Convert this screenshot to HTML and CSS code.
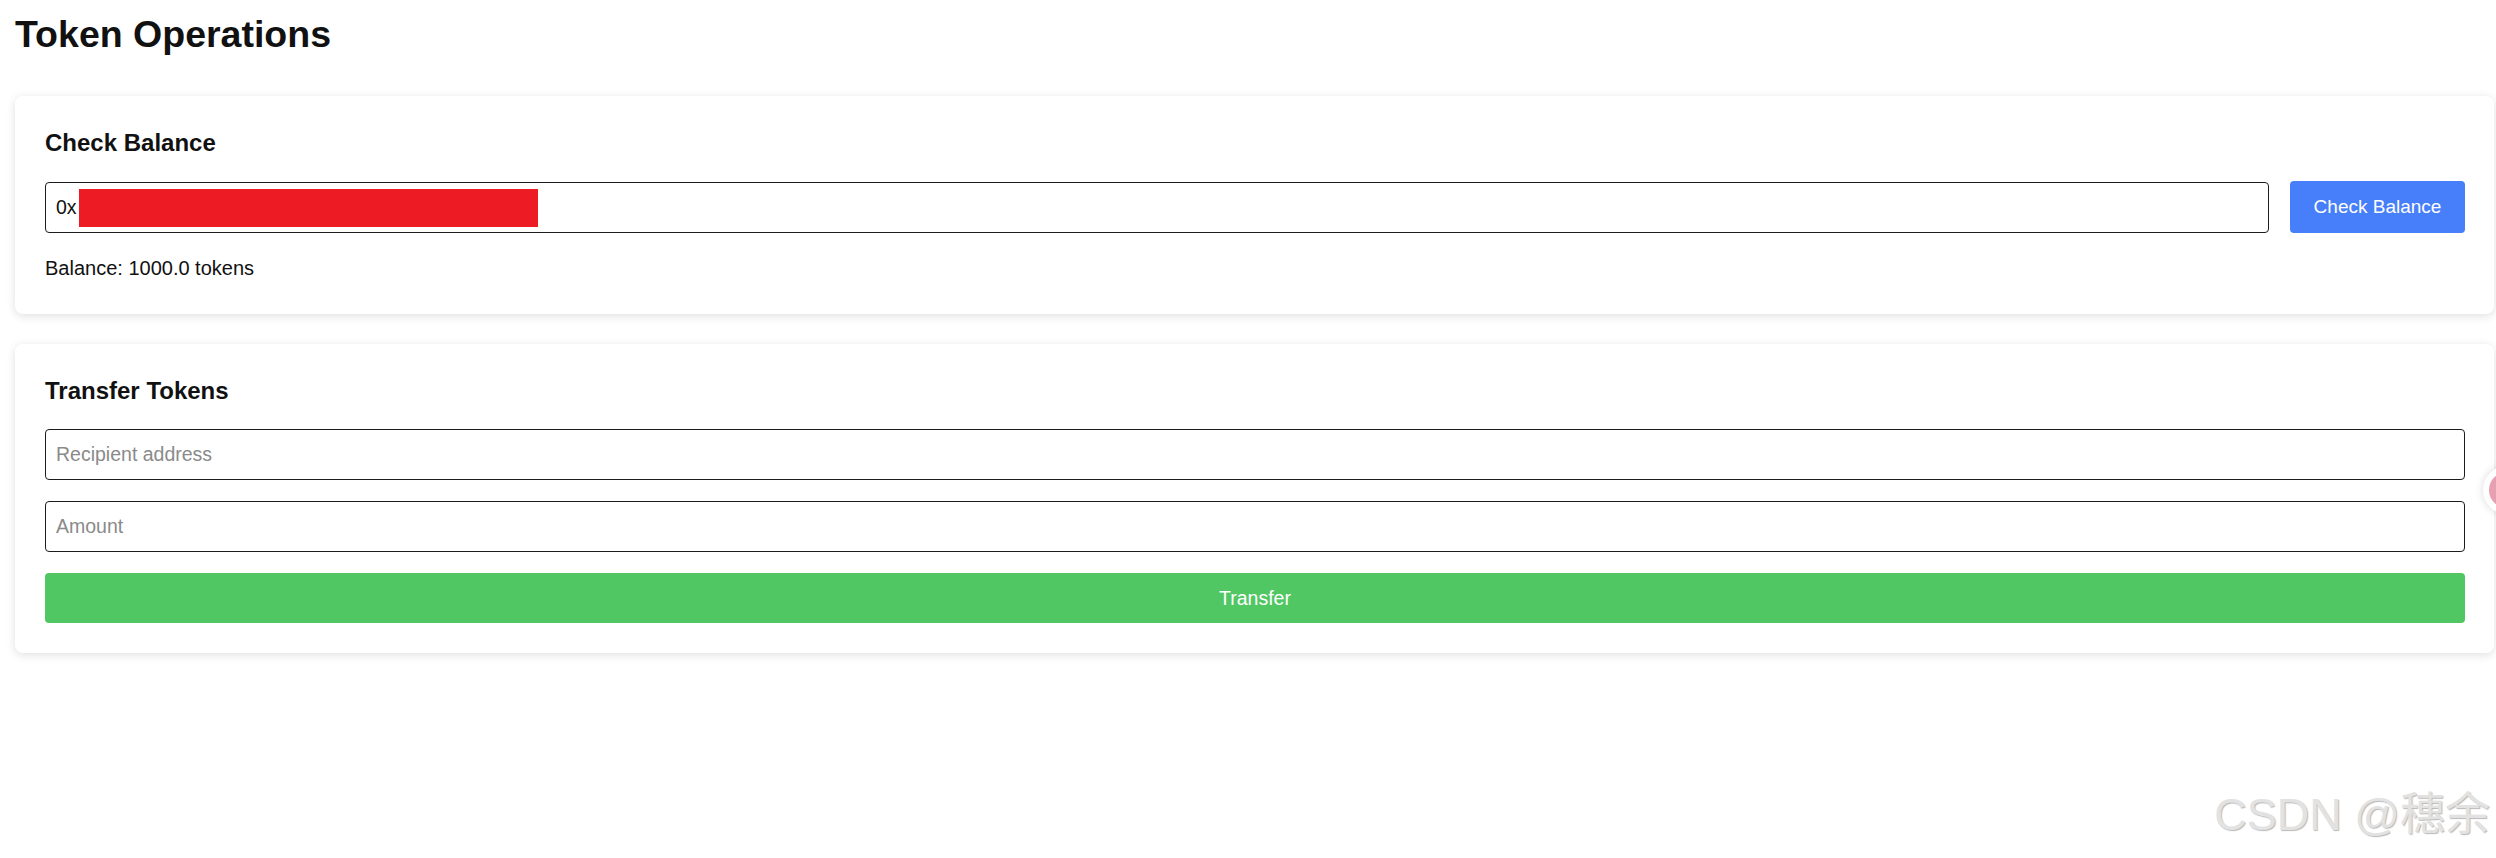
FILE: index.html
```html
<!DOCTYPE html>
<html lang="en">
<head>
  <meta charset="UTF-8" />
  <meta name="viewport" content="width=device-width, initial-scale=1" />
  <title>Token Operations</title>
  <link rel="stylesheet" href="styles.css">
</head>
<body>
  <h1>Token Operations</h1>

  <!-- Balance lookup -->
  <section class="card">
    <h2>Check Balance</h2>
    <div class="row">
      <div class="field">
        <input type="text" value="0x" aria-label="Address">
        <span class="redact"></span>
      </div>
      <button class="btn btn-blue">Check Balance</button>
    </div>
    <p class="balance">Balance: 1000.0 tokens</p>
  </section>

  <!-- Transfer form -->
  <section class="card">
    <h2>Transfer Tokens</h2>
    <div class="stack">
      <input type="text" placeholder="Recipient address">
      <input type="text" placeholder="Amount">
      <button class="btn btn-green">Transfer</button>
    </div>
  </section>

  <div class="float-dot"></div>
  <div class="watermark">CSDN @穗余</div>
</body>
</html>
```

FILE: styles.css
```css
html, body { margin: 0; padding: 0; }
body {
  font-family: "Liberation Sans", Arial, sans-serif;
  color: #111;
  background: #fff;
  padding: 0 2px 0 15px;
  min-height: 858px;
  position: relative;
  overflow: hidden;
}
h1 {
  font-size: 37.5px;
  line-height: 41px;
  margin: 14px 0 41px;
}
/* Cards */
.card {
  background: #fff;
  border-radius: 8px;
  box-shadow: 0 2px 10px rgba(0, 0, 0, 0.13);
  padding: 33px 29px 30px 30px;
  margin-bottom: 30px;
}
.card h2 {
  font-size: 24px;
  line-height: 28px;
  margin: 0 0 24px;
}
.row { display: flex; align-items: center; gap: 21px; }
.field { flex: 1; position: relative; display: flex; }
.field input { flex: 1; }
.stack { display: flex; flex-direction: column; gap: 21px; }
input {
  height: 51px;
  box-sizing: border-box;
  border: 1px solid #1c1c1c;
  border-radius: 4px;
  padding: 0 10px;
  font-family: inherit;
  font-size: 19.5px;
  color: #111;
  background: #fff;
  outline: none;
}
input::placeholder { color: #8a8a8a; }
/* Redacted address */
.redact {
  position: absolute;
  left: 34px; top: 7px;
  width: 459px; height: 38px;
  background: #ed1c24;
}
.btn {
  border: none;
  border-radius: 4px;
  color: #fff;
  font-family: inherit;
  cursor: pointer;
}
.btn-blue { background: #477efa; width: 175px; height: 52px; font-size: 19px; }
.btn-green { background: #50c763; height: 50px; width: 100%; font-size: 19.5px; }
.balance {
  font-size: 20px;
  line-height: 23px;
  margin: 24px 0 4px;
}
/* Overlays */
.float-dot {
  position: absolute;
  left: 2483px; top: 466px;
  width: 36px; height: 36px;
  border-radius: 50%;
  background: #e6a0b2;
  border: 6px solid #fff;
  box-shadow: 0 0 8px rgba(0, 0, 0, 0.15);
}
.watermark {
  position: absolute;
  right: 6px; bottom: 15px;
  font-family: "Liberation Sans", "Noto Sans CJK SC", sans-serif;
  font-size: 45px;
  color: #e2e2e2;
  text-shadow: 1px 1px 1px #b8b8b8;
}
```
